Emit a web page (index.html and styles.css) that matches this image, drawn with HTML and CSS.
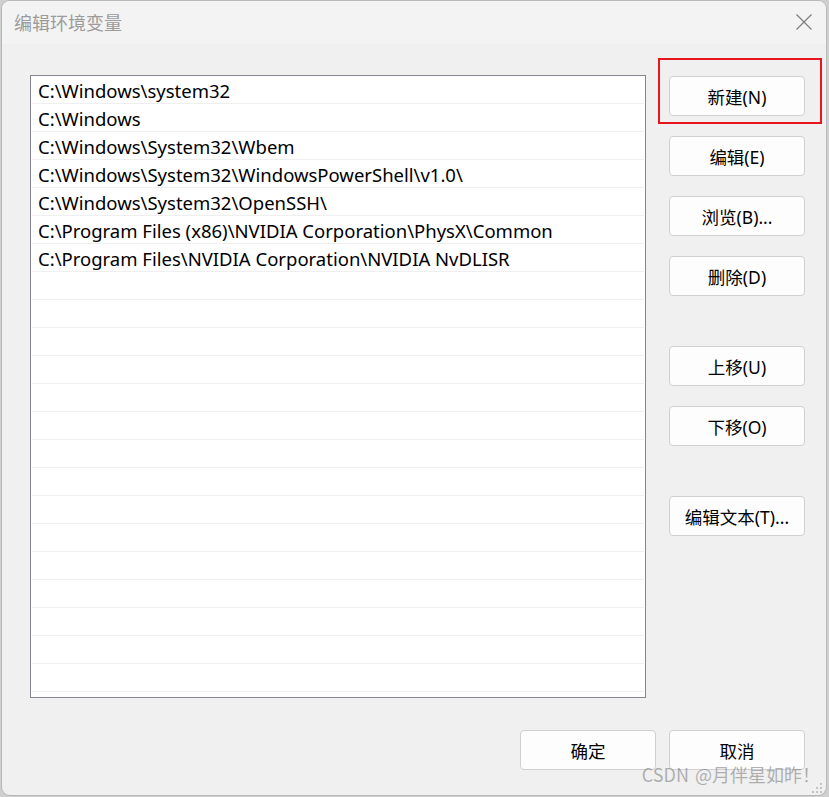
FILE: index.html
```html
<!DOCTYPE html>
<html lang="zh-CN">
<head>
  <meta charset="UTF-8" />
  <title>编辑环境变量</title>
  <link rel="stylesheet" href="styles.css">
</head>
<body>

<div class="desktop">
  <div class="dialog">
    <div class="titlebar">
      <span class="title">编辑环境变量</span>
      <button class="close" aria-label="关闭">
        <svg width="16" height="16" viewBox="0 0 16 16">
          <path d="M0.5 0.5 L15.5 15.5 M15.5 0.5 L0.5 15.5" stroke="#7d7d7d" stroke-width="1.2" fill="none" />
        </svg>
      </button>
    </div>

    <div class="content">
      <div class="main">
        <div class="path-list" id="pathList"></div>

        <div class="actions">
          <div class="group">
            <span class="highlight"><button class="btn">新建(N)</button></span>
            <button class="btn">编辑(E)</button>
            <button class="btn">浏览(B)...</button>
            <button class="btn">删除(D)</button>
          </div>
          <div class="group">
            <button class="btn">上移(U)</button>
            <button class="btn">下移(O)</button>
          </div>
          <div class="group">
            <button class="btn">编辑文本(T)...</button>
          </div>
        </div>
      </div>

      <div class="footer">
        <button class="btn">确定</button>
        <button class="btn">取消</button>
      </div>
    </div>

    <span class="watermark">CSDN @月伴星如昨！</span>
    <svg class="grip" width="10" height="10" viewBox="0 0 10 10">
      <rect x="8" y="0" width="2" height="2" fill="#c4c4c4" />
      <rect x="4" y="4" width="2" height="2" fill="#c4c4c4" />
      <rect x="8" y="4" width="2" height="2" fill="#c4c4c4" />
      <rect x="0" y="8" width="2" height="2" fill="#c4c4c4" />
      <rect x="4" y="8" width="2" height="2" fill="#c4c4c4" />
      <rect x="8" y="8" width="2" height="2" fill="#c4c4c4" />
    </svg>
  </div>
</div>

<script>
  const paths = [
    'C:\\Windows\\system32',
    'C:\\Windows',
    'C:\\Windows\\System32\\Wbem',
    'C:\\Windows\\System32\\WindowsPowerShell\\v1.0\\',
    'C:\\Windows\\System32\\OpenSSH\\',
    'C:\\Program Files (x86)\\NVIDIA Corporation\\PhysX\\Common',
    'C:\\Program Files\\NVIDIA Corporation\\NVIDIA NvDLISR'
  ];

  // fill the list, empty rows keep the grid lines going
  const list = document.getElementById('pathList');
  for (let i = 0; i < 23; i++) {
    const row = document.createElement('div');
    row.className = 'row';
    row.textContent = paths[i] || '';
    list.appendChild(row);
  }
</script>

</body>
</html>
```

FILE: styles.css
```css
body {
  margin: 0;
  padding: 0;
  font-family: "Noto Sans", "Noto Sans CJK SC", sans-serif;
  background-color: #cfcfcf;
}

.desktop {
  padding: 1px 3px 2px 2px;
  height: 797px;
  box-sizing: border-box;
}

.dialog {
  position: relative;
  width: 824px;
  height: 794px;
  background-color: #f0f0f0;
  border-radius: 8px;
  overflow: hidden;
  box-shadow: 0 0 0 1px #b8b8b8;
}

.titlebar {
  height: 43px;
  background-color: #f3f3f3;
  display: flex;
  align-items: center;
  justify-content: space-between;
  padding: 0 14px 0 12px;
}

.title {
  font-family: "Noto Sans CJK SC", sans-serif;
  font-size: 18px;
  color: #9b9b9b;
  margin-top: -2px;
}

.close {
  background: none;
  border: none;
  padding: 0;
  width: 16px;
  height: 16px;
  margin-top: -1px;
}

.content {
  padding: 31px 21px 0 28px;
}

.main {
  display: flex;
  gap: 23px;
}

.path-list {
  width: 614px;
  height: 621px;
  border: 1px solid #86868f;
  background-color: #ffffff;
  overflow: hidden;
}

.row {
  height: 28px;
  box-sizing: border-box;
  padding-left: 6px;
  margin-left: 1px;
  margin-right: 1px;
  border-bottom: 1px solid #efefef;
  font-size: 18.5px;
  line-height: 29px;
  color: #000000;
  white-space: nowrap;
}

.actions {
  display: flex;
  flex-direction: column;
  gap: 50px;
  padding-top: 1px;
}

.group {
  display: flex;
  flex-direction: column;
  gap: 20px;
}

.btn {
  width: 136px;
  height: 40px;
  background-color: #fdfdfd;
  border: 1px solid #d0d0d0;
  border-radius: 4px;
  font-family: "Noto Sans", "Noto Sans CJK SC", sans-serif;
  font-size: 17.5px;
  color: #000000;
  padding: 0;
}

.highlight {
  position: relative;
  display: block;
}

.highlight::after {
  content: "";
  position: absolute;
  left: -11px;
  top: -18px;
  width: 160px;
  height: 62px;
  border: 2px solid #e8141e;
}

.footer {
  display: flex;
  justify-content: flex-end;
  gap: 13px;
  margin-top: 32px;
}

.watermark {
  position: absolute;
  right: 6px;
  bottom: 8px;
  font-family: "Noto Sans CJK SC", sans-serif;
  font-size: 18px;
  word-spacing: 2px;
  color: rgba(128, 128, 128, 0.6);
}

.grip {
  position: absolute;
  right: 4px;
  bottom: 2px;
}
```
